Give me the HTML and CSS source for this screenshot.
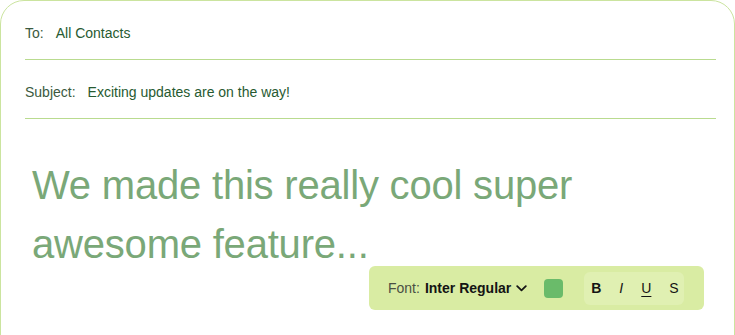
FILE: index.html
```html
<!DOCTYPE html>
<html lang="en">
<head>
    <meta charset="UTF-8">
    <title>Compose</title>
    <link rel="stylesheet" href="styles.css">
</head>
<body>
    <div class="composer">
        <div class="field">
            <span class="field-label">To:</span>
            <span class="field-value">All Contacts</span>
        </div>
        <div class="field">
            <span class="field-label">Subject:</span>
            <span class="field-value">Exciting updates are on the way!</span>
        </div>
        <div class="message">We made this really cool super awesome feature...</div>

        <div class="toolbar">
            <span class="font-label">Font:</span>
            <span class="font-name">Inter Regular</span>
            <svg class="chevron" width="11" height="7" viewBox="0 0 11 7">
                <path d="M1.2 1.2 L5.5 5.4 L9.8 1.2" fill="none" stroke="#151515" stroke-width="1.8" stroke-linecap="round" stroke-linejoin="round"/>
            </svg>
            <span class="swatch"></span>
            <div class="format-group">
                <span class="fmt fmt-b">B</span>
                <span class="fmt fmt-i">I</span>
                <span class="fmt fmt-u">U</span>
                <span class="fmt fmt-s">S</span>
            </div>
        </div>
    </div>
</body>
</html>
```

FILE: styles.css
```css
:root {
    --card-border: #cbe49f;
    --divider: #b9db8f;
    --label: #3b5a40;
    --value: #275a31;
    --body-text: #7aa878;
    --toolbar-bg: #d9eca3;
    --group-bg: #e0f0b2;
    --swatch: #6abb6a;
}

* {
    margin: 0;
    padding: 0;
    box-sizing: border-box;
}

body {
    font-family: "Liberation Sans", Arial, sans-serif;
    background: #ffffff;
    overflow: hidden;
}

.composer {
    position: relative;
    width: 735px;
    height: 360px;
    border: 1.5px solid var(--card-border);
    border-radius: 24px;
    padding: 0 18px 0 24px;
}

.field {
    display: flex;
    align-items: center;
    height: 59px;
    padding-top: 6px;
    border-bottom: 1px solid var(--divider);
    font-size: 14px;
}

.field-label {
    color: var(--label);
    margin-right: 12px;
}

.field-value {
    color: var(--value);
}

.message {
    margin-top: 37px;
    padding-left: 7px;
    width: 600px;
    font-size: 40px;
    line-height: 59px;
    letter-spacing: -0.2px;
    color: var(--body-text);
}

.toolbar {
    position: absolute;
    left: 368px;
    top: 265px;
    width: 335px;
    height: 44px;
    display: flex;
    align-items: center;
    padding-left: 19px;
    background: var(--toolbar-bg);
    border-radius: 6px;
    font-size: 14px;
}

.font-label {
    color: #4a4f44;
    margin-right: 5px;
}

.font-name {
    color: #141414;
    font-weight: bold;
}

.chevron {
    margin-left: 5px;
}

.swatch {
    width: 19px;
    height: 19px;
    margin-left: 17px;
    border-radius: 4px;
    background: var(--swatch);
}

.format-group {
    display: flex;
    align-items: center;
    height: 33px;
    margin-left: 21px;
    padding: 0 5px 0 7px;
    background: var(--group-bg);
    border-radius: 6px;
}

.fmt {
    color: #141414;
    width: 28px;
    font-weight: bold;
    font-size: 14px;
}

.fmt-i {
    font-weight: normal;
    font-style: italic;
    width: 22px;
}

.fmt-u {
    font-weight: normal;
    text-decoration: underline;
    text-underline-offset: 3px;
}

.fmt-s {
    font-weight: normal;
    width: 10px;
}
```
